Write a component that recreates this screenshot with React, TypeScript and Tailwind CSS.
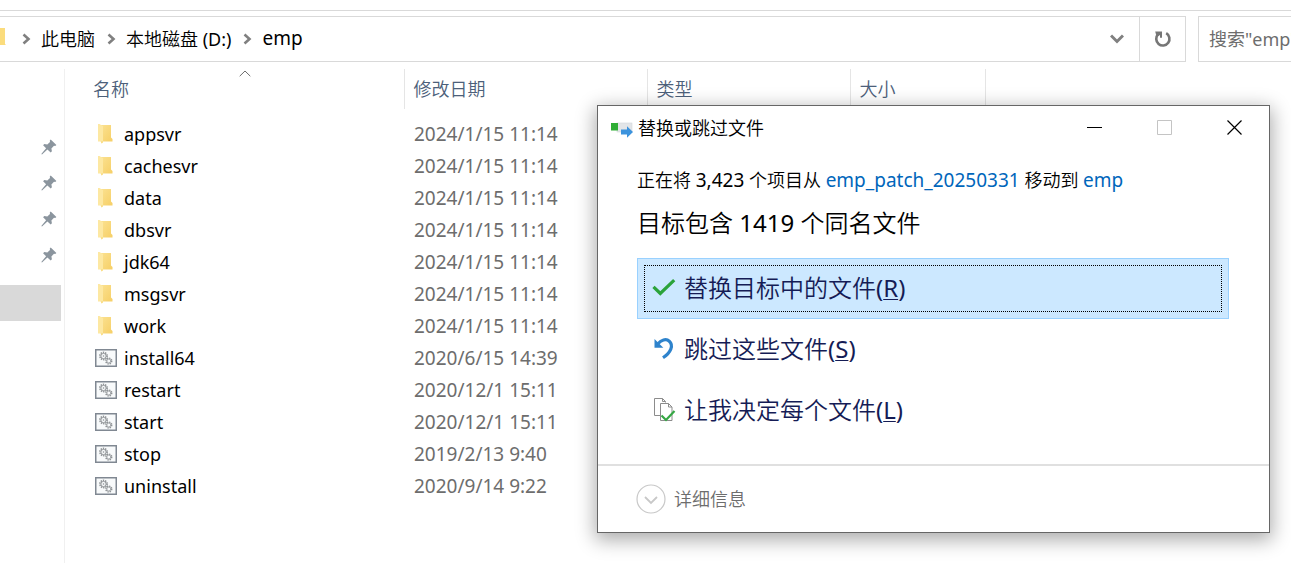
import React from "react";

type Entry = { name: string; date: string; kind: "folder" | "batch" };

const entries: Entry[] = [
  { name: "appsvr", date: "2024/1/15 11:14", kind: "folder" },
  { name: "cachesvr", date: "2024/1/15 11:14", kind: "folder" },
  { name: "data", date: "2024/1/15 11:14", kind: "folder" },
  { name: "dbsvr", date: "2024/1/15 11:14", kind: "folder" },
  { name: "jdk64", date: "2024/1/15 11:14", kind: "folder" },
  { name: "msgsvr", date: "2024/1/15 11:14", kind: "folder" },
  { name: "work", date: "2024/1/15 11:14", kind: "folder" },
  { name: "install64", date: "2020/6/15 14:39", kind: "batch" },
  { name: "restart", date: "2020/12/1 15:11", kind: "batch" },
  { name: "start", date: "2020/12/1 15:11", kind: "batch" },
  { name: "stop", date: "2019/2/13 9:40", kind: "batch" },
  { name: "uninstall", date: "2020/9/14 9:22", kind: "batch" },
];

function Chevron() {
  return (
    <svg width="9" height="12" viewBox="0 0 9 12" fill="none" stroke="#808080" strokeWidth="2.6" aria-hidden="true">
      <path d="M1.5 1.5 6.5 6 1.5 10.5" />
    </svg>
  );
}

function FolderIcon() {
  return (
    <svg width="22" height="22" viewBox="0 0 22 22" aria-hidden="true">
      <defs>
        <linearGradient id="folder-back" x1="0" y1="0" x2="1" y2="1">
          <stop offset="0" stopColor="#fbe190" />
          <stop offset="1" stopColor="#f6cf66" />
        </linearGradient>
      </defs>
      <path d="M6 2h10v12.500l1.500 1.500v2.500H6z" fill="url(#folder-back)" />
      <path d="M3 1h1.500L8 3.200V19l-1.200 1.500L5.500 18.500H3z" fill="#fde8a2" />
      <path d="M5.800 18.500H8V19l-1.200 1.600z" fill="#f8d878" />
    </svg>
  );
}

function BatchIcon() {
  return (
    <svg width="22" height="18" viewBox="0 0 22 18" fill="none" aria-hidden="true">
      <rect x=".75" y=".75" width="20.5" height="16.5" fill="#f8fafb" stroke="#808892" strokeWidth="1.5" />
      <circle cx="8.5" cy="7" r="3.6" stroke="#8d9194" strokeWidth="1.6" strokeDasharray="1.4 .86" />
      <circle cx="8.5" cy="7" r="2.6" stroke="#8d9194" strokeWidth=".9" />
      <circle cx="8.5" cy="7" r=".8" fill="#8d9194" />
      <circle cx="13.8" cy="12" r="2.9" stroke="#8d9194" strokeWidth="1.5" strokeDasharray="1.3 .98" />
      <circle cx="13.8" cy="12" r="2" stroke="#8d9194" strokeWidth=".8" />
    </svg>
  );
}

function PinIcon() {
  return (
    <svg width="16" height="16" viewBox="0 0 16 16" aria-hidden="true">
      <path d="M9.7.6 15.4 6l-1.2.9-1.2-.2-2.6 2.7.5 2.9-1.2 1.1-3.3-3L1 15.6l-.7-.7 4.8-5.6-3-3.1 1.2-1.1 3 .4L9 2.9 8.8 1.5z" fill="#8b959e" />
    </svg>
  );
}

function AddressBar() {
  return (
    <header className="mt-[10px] flex gap-3 border-t border-[#d9d9d9] pt-[5px]">
      <div className="flex h-[46px] min-w-0 flex-1 border-y border-[#d9d9d9]">
        <nav aria-label="路径" className="flex min-w-0 flex-1 items-center">
          <svg width="6" height="20" viewBox="0 0 6 20" className="mb-1" aria-hidden="true">
            <path d="M0 1h5v16l1 1H0z" fill="#fbdc7c" />
          </svg>
          <ol className="flex items-center text-lg">
            <li className="flex items-center gap-[10px] pl-4">
              <Chevron />
              <a href="#pc" className="font-[350]">此电脑</a>
            </li>
            <li className="flex items-center gap-[10px] pl-3">
              <Chevron />
              <a href="#d">
                <span className="font-[350]">本地磁盘</span> (D:)
              </a>
            </li>
            <li className="flex items-center gap-[10px] pl-3">
              <Chevron />
              <a href="#emp" className="text-[19px]">emp</a>
            </li>
          </ol>
        </nav>
        <button aria-label="以前的位置" className="flex w-[45px] items-center justify-center">
          <svg width="14" height="10" viewBox="0 0 14 10" fill="none" stroke="#808080" strokeWidth="3" aria-hidden="true">
            <path d="M1 1.5 7 7.5 13 1.5" />
          </svg>
        </button>
        <button aria-label="刷新" className="flex w-[47px] items-center justify-center border-x border-[#d9d9d9]">
          <svg width="18" height="18" viewBox="0 0 18 18" fill="none" aria-hidden="true">
            <path d="M12.2 3.2A6.6 6.6 0 1 1 4.2 4.2" stroke="#767676" strokeWidth="2.6" />
            <path d="M1.2 1.4H8v6.4H6V4.9L3.6 6.6 2 4.6z" fill="#767676" />
          </svg>
        </button>
      </div>
      <input
        type="text"
        aria-label="搜索"
        placeholder={'搜索"emp"'}
        className="h-[46px] w-[93px] rounded-none border border-r-0 border-[#d9d9d9] pl-[10px] text-lg outline-none placeholder:text-[#6d6d6d]"
      />
    </header>
  );
}

function QuickAccess() {
  return (
    <aside className="w-[65px] shrink-0 border-r border-[#f0f0f0] pt-[60px]">
      <ul>
        {["a", "b", "c", "d"].map((k) => (
          <li key={k} className="flex h-9 items-center justify-end pr-[7px]">
            <PinIcon />
          </li>
        ))}
        <li className="mt-3 mr-[3px] h-9 bg-[#d9d9d9]" />
      </ul>
    </aside>
  );
}

function FileTable() {
  return (
    <main className="min-w-0 flex-1">
      <table className="w-full table-fixed text-left text-lg">
        <colgroup>
          <col className="w-[339px]" />
          <col className="w-[243px]" />
          <col className="w-[203px]" />
          <col className="w-[135px]" />
          <col />
        </colgroup>
        <thead className="text-[#4c607a]">
          <tr className="h-10">
            <th className="relative pl-7 font-[350]">
              名称
              <svg width="12" height="7" viewBox="0 0 12 7" fill="none" stroke="#6d6d6d" className="absolute top-px left-[174px]" aria-hidden="true">
                <path d="M.7 6.2 6 1 11.3 6.2" />
              </svg>
            </th>
            <th className="border-l border-[#e5e5e5] pl-[9px] font-[350]">修改日期</th>
            <th className="border-l border-[#e5e5e5] pl-[9px] font-[350]">类型</th>
            <th className="border-l border-[#e5e5e5] pl-[9px] font-[350]">大小</th>
            <td className="border-l border-[#e5e5e5]" />
          </tr>
        </thead>
        <tbody className="before:block before:h-[9px]">
          {entries.map((e) => (
            <tr key={e.name} className="h-8">
              <td className="pl-[30px]">
                <span className="flex items-center gap-[7px]">
                  {e.kind === "folder" ? <FolderIcon /> : <BatchIcon />}
                  {e.name}
                </span>
              </td>
              <td className="pl-[10px] text-[19px] leading-7 text-[#6d6d6d]">{e.date}</td>
              <td />
              <td />
              <td />
            </tr>
          ))}
        </tbody>
      </table>
    </main>
  );
}

function Choice({ icon, label, hotkey, selected = false }: { icon: React.ReactNode; label: string; hotkey: string; selected?: boolean }) {
  return (
    <button
      className={
        selected
          ? "block h-[61px] w-full border border-[#99d1ff] bg-[#cce8ff] p-[6px] text-left"
          : "block h-[61px] w-full border border-transparent p-[6px] text-left"
      }
    >
      <span
        className={
          selected
            ? "flex h-full items-center gap-2 border border-dotted border-black pl-[7px]"
            : "flex h-full items-center gap-2 border border-transparent pl-[7px]"
        }
      >
        {icon}
        <span>
          <span className="font-[350]">{label}</span>(<span className="underline decoration-1 underline-offset-2">{hotkey}</span>)
        </span>
      </span>
    </button>
  );
}

function ConflictDialog() {
  return (
    <section
      role="dialog"
      aria-labelledby="dialog-title"
      className="absolute top-[105px] left-[597px] w-[673px] border border-[#666666] bg-white shadow-[0_5px_18px_2px_rgba(0,0,0,0.33)]"
    >
      <div className="flex h-[43px] items-center pl-3">
        <svg width="24" height="18" viewBox="0 0 24 18" className="mt-1" aria-hidden="true">
          <rect x="7" y="2" width="15" height="9" fill="#e3e5e8" stroke="#d2d5d9" strokeWidth=".6" />
          <rect x="1" y="2" width="7" height="7.500" fill="#2fad35" />
          <path d="M11 8.500h6V5.200l6 5.800-6 5.800v-3.300h-6z" fill="#3c93dd" />
        </svg>
        <h1 id="dialog-title" className="ml-1 flex-1 text-lg font-[350]">替换或跳过文件</h1>
        <button aria-label="最小化" className="flex h-full w-[70px] items-center justify-center">
          <svg width="15" height="15" viewBox="0 0 15 15" stroke="#000" aria-hidden="true"><path d="M0 7.5h15" /></svg>
        </button>
        <button aria-label="最大化" disabled className="flex h-full w-[70px] items-center justify-center">
          <svg width="15" height="15" viewBox="0 0 15 15" fill="none" stroke="#c4c4c4" aria-hidden="true"><path d="M.5.5h14v14H.5z" /></svg>
        </button>
        <button aria-label="关闭" className="flex h-full w-[70px] items-center justify-center">
          <svg width="15" height="15" viewBox="0 0 15 15" stroke="#000" strokeWidth="1.2" aria-hidden="true"><path d="M.5.5l14 14M14.5.5l-14 14" /></svg>
        </button>
      </div>
      <div className="px-10 pb-[23px]">
        <p className="mt-[17px] -ml-px text-lg">
          <span className="font-[350]">正在将</span> <span className="text-[19px]">3,423</span>{" "}
          <span className="font-[350]">个项目从</span>{" "}
          <a href="#source" className="text-[19px] text-[#0066bb]">emp_patch_20250331</a>{" "}
          <span className="font-[350]">移动到</span>{" "}
          <a href="#target" className="text-[19px] text-[#0066bb]">emp</a>
        </p>
        <h2 className="mt-[11px] -ml-px text-2xl leading-8">
          <span className="font-[350]">目标包含</span> 1419 <span className="font-[350]">个同名文件</span>
        </h2>
        <div className="mt-[19px] -ml-px text-2xl text-[#151c55]">
          <Choice
            selected
            label="替换目标中的文件"
            hotkey="R"
            icon={
              <svg width="24" height="24" viewBox="0 0 24 24" fill="none" aria-hidden="true">
                <path d="M1.5 10.8 8.3 17.5 22.2 4.2" stroke="#2ba33a" strokeWidth="3.2" />
              </svg>
            }
          />
          <Choice
            label="跳过这些文件"
            hotkey="S"
            icon={
              <svg width="24" height="24" viewBox="0 0 24 24" fill="none" aria-hidden="true">
                <path d="M2.5 2v8.8h8.8z" fill="#2e83cc" />
                <path d="M5.5 7.2C9 3 14 1.2 17.3 4.2c4.600 4.300 1.500 11.300-6.300 16.600" stroke="#2e83cc" strokeWidth="3.200" />
              </svg>
            }
          />
          <Choice
            label="让我决定每个文件"
            hotkey="L"
            icon={
              <svg width="24" height="26" viewBox="0 0 24 26" fill="none" aria-hidden="true">
                <path d="M8 18.500H2.500V1.500h8l3 3v1" stroke="#8c8c8c" />
                <path d="M10.500 1.500v3h3" stroke="#8c8c8c" />
                <path d="M8.500 6.500h8l3.500 3.500v13.500H8.500z" fill="#fff" stroke="#8c8c8c" />
                <path d="M16.500 6.500V10H20" stroke="#8c8c8c" />
                <path d="M9.500 18.500 14 23l8.500-9" stroke="#35a744" strokeWidth="2.200" />
              </svg>
            }
          />
        </div>
      </div>
      <footer className="border-t-2 border-[#e0e0e0] px-[38px]">
        <button className="flex h-[66px] items-center gap-2 text-lg font-[350] text-[#6d6d6d]">
          <svg width="30" height="30" viewBox="0 0 30 30" fill="none" stroke="#c8c8c8" aria-hidden="true">
            <circle cx="15" cy="15" r="14" strokeWidth="1.200" />
            <path d="M9 13 15 19 21 13" strokeWidth="1.800" />
          </svg>
          详细信息
        </button>
      </footer>
    </section>
  );
}

export default function App() {
  return (
    <div className="relative flex min-h-screen flex-col overflow-hidden bg-white font-['Noto_Sans','Noto_Sans_CJK_SC',sans-serif] text-black">
      <AddressBar />
      <div className="flex flex-1 pt-[7px]">
        <QuickAccess />
        <FileTable />
      </div>
      <ConflictDialog />
    </div>
  );
}
